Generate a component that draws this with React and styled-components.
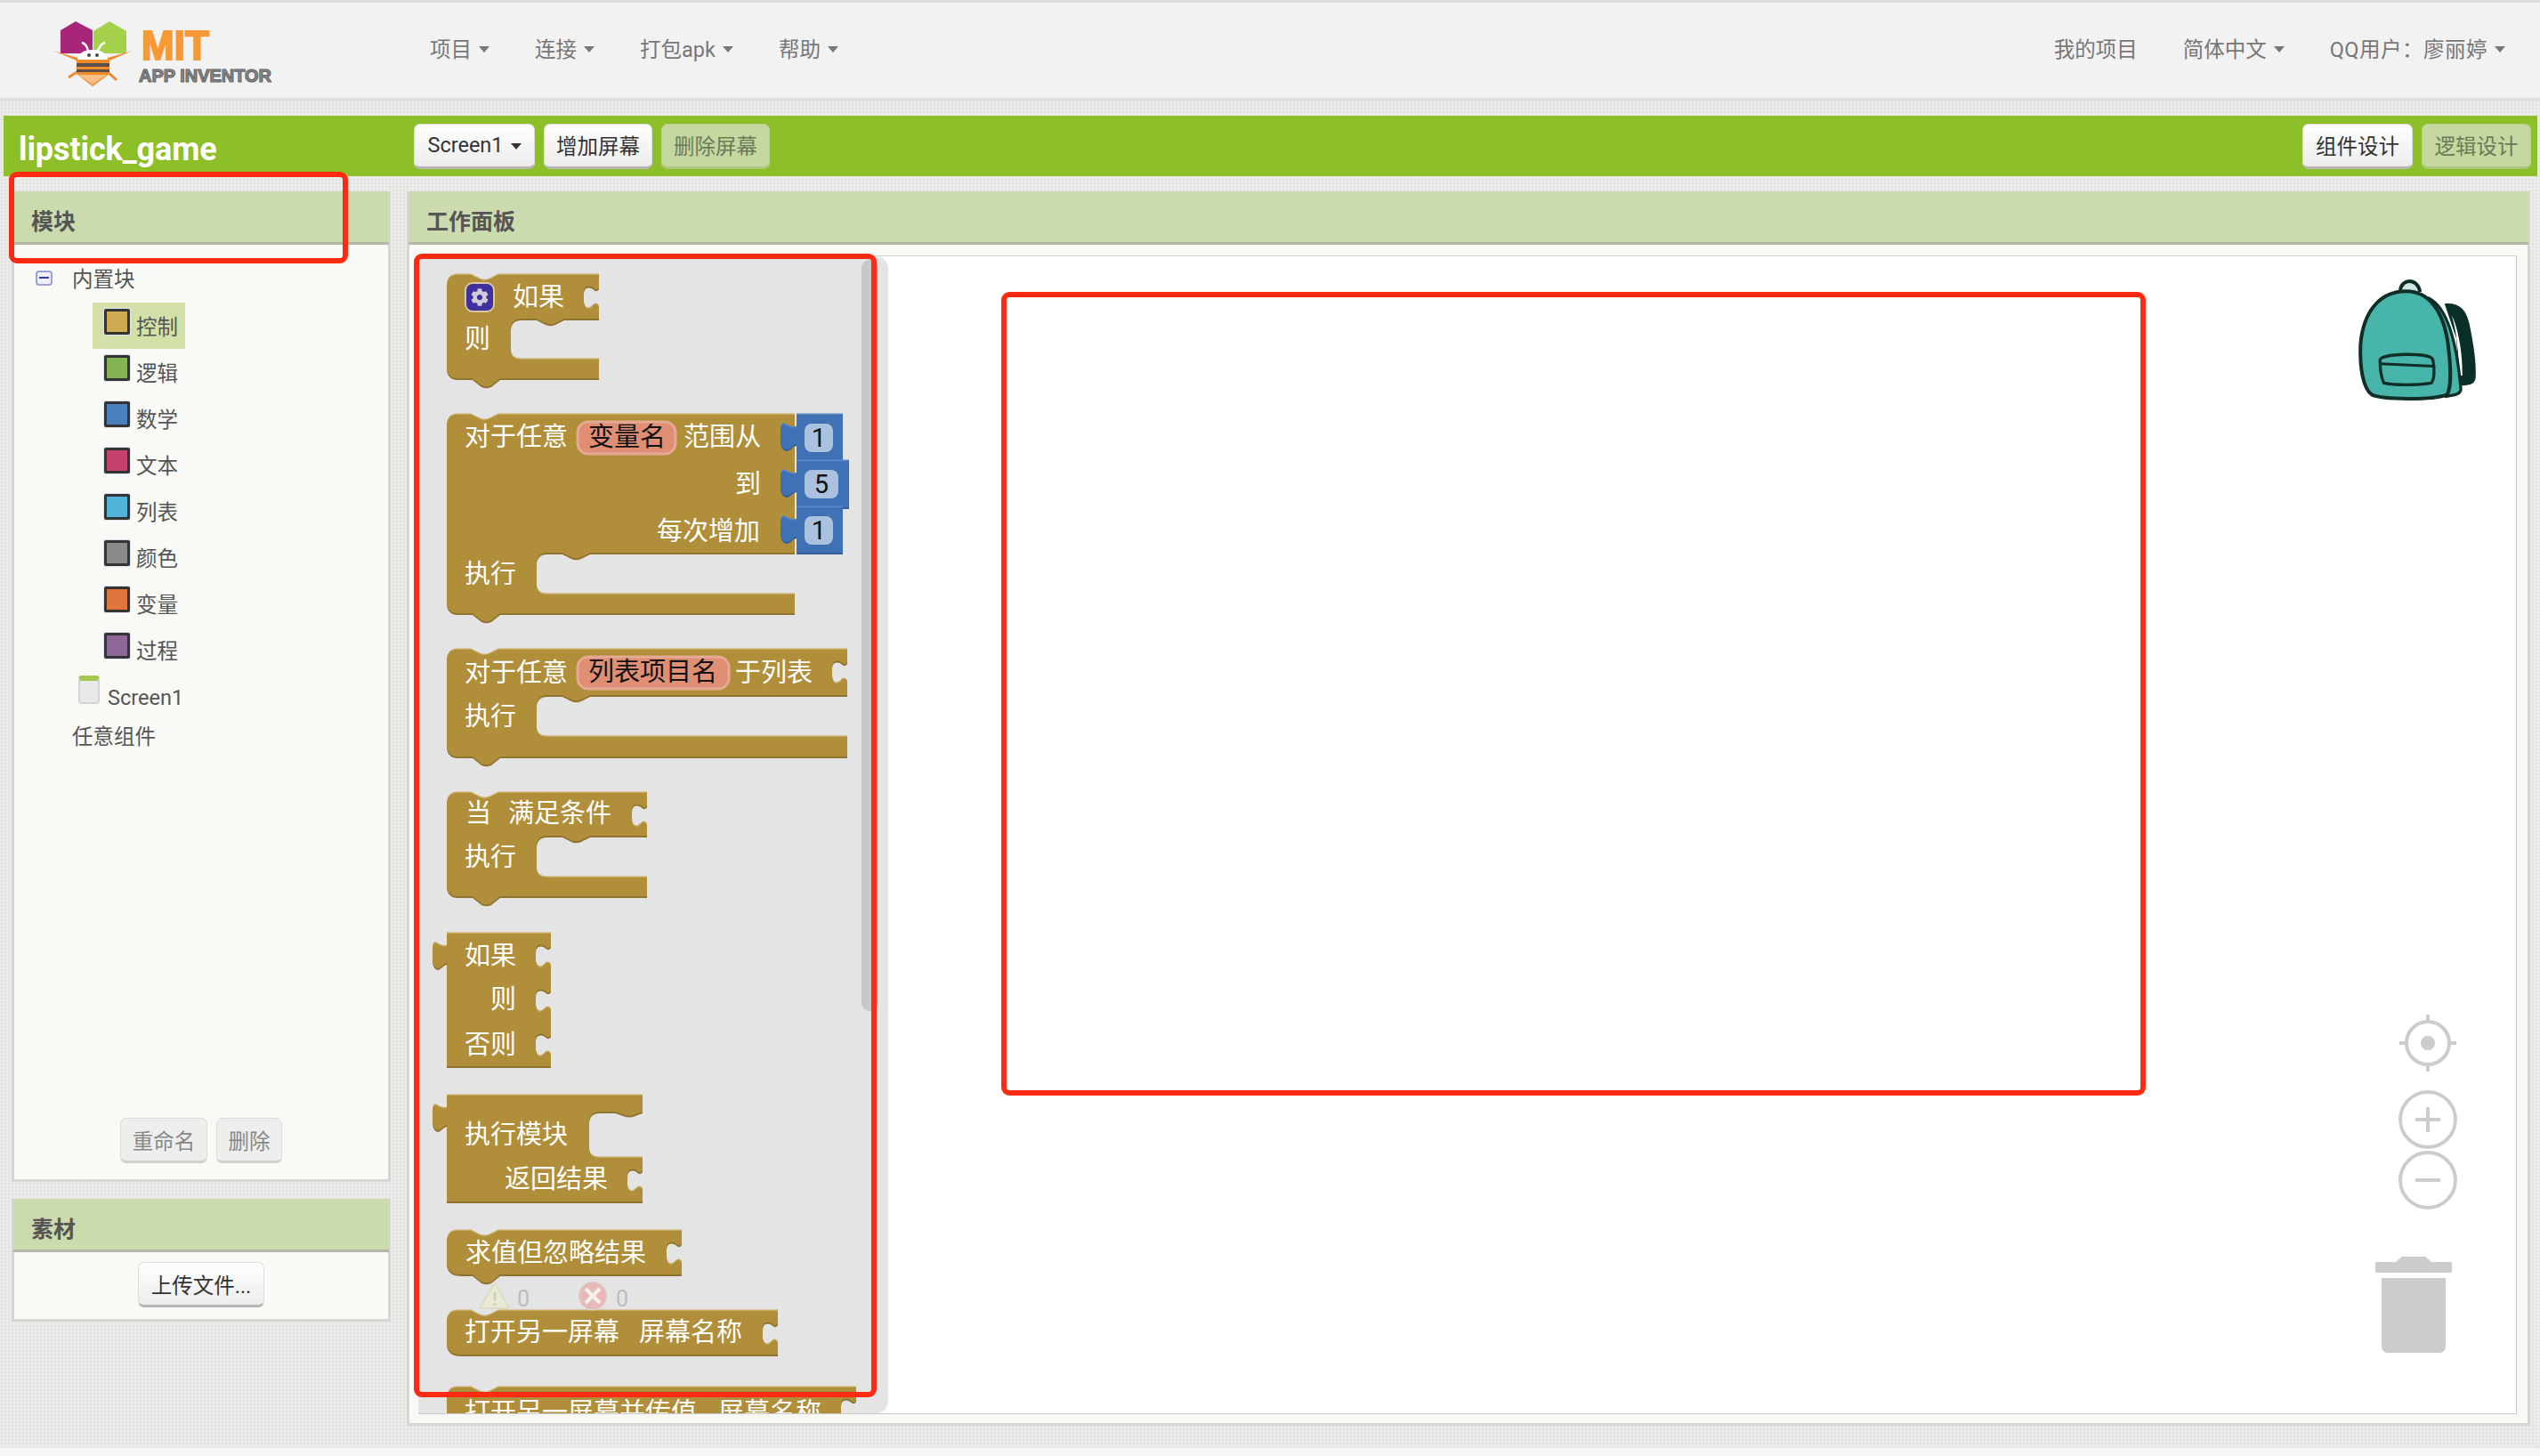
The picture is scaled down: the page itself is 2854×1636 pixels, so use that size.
import React from 'react';
import styled, { createGlobalStyle } from 'styled-components';
import { FaCog } from 'react-icons/fa';

const FONT = 'Roboto, "Noto Sans CJK SC", sans-serif';

const Global = createGlobalStyle`
  html, body { margin: 0; padding: 0; background: #ebebe9; }
  * { box-sizing: border-box; }
`;

const Page = styled.div`
  position: relative;
  width: 2854px;
  height: 1636px;
  overflow: hidden;
  display: flex;
  flex-direction: column;
  font-family: ${FONT};
  font-size: 23.5px;
  background-color: #ebebe9;
  background-image: radial-gradient(rgba(0, 0, 0, 0.045) 1px, transparent 1.2px);
  background-size: 4px 4px;
`;

const TopBar = styled.div`
  height: 113px;
  flex: none;
  display: flex;
  align-items: center;
  padding: 0 39px 0 56px;
  background: #f2f2f2;
  border-top: 3px solid #dcdcdc;
  border-bottom: 3px solid #dedede;
`;
const Logo = styled.svg`
  width: 270px;
  height: 80px;
  margin-top: 7px;
  flex: none;
`;
const Nav = styled.div`
  display: flex;
  align-items: center;
  gap: 51px;
  margin-top: -5px;
  margin-left: ${(p) => p.$left || '157px'};
`;
const NavItem = styled.div`
  display: flex;
  align-items: center;
  color: #777;
  white-space: nowrap;
  letter-spacing: ${(p) => p.$track || 0}px;
`;
const Caret = styled.span`
  display: inline-block;
  margin-left: 8px;
  margin-top: 3px;
  border-left: 6.5px solid transparent;
  border-right: 6.5px solid transparent;
  border-top: 7px solid ${(p) => p.$color || '#777'};
`;

const Toolbar = styled.div`
  height: 68px;
  flex: none;
  margin: 17px 3px 0 4px;
  background: #8dc028;
  display: flex;
  align-items: center;
  padding-right: 7px;
`;
const ProjectName = styled.div`
  width: 461px;
  flex: none;
  padding: 7px 0 0 17px;
  color: #fff;
  font-size: 36px;
  font-weight: 700;
  letter-spacing: -0.1px;
`;
const ToolGroup = styled.div`
  display: flex;
  gap: 10px;
  margin-left: ${(p) => p.$left || 0};
`;
const Button = styled.button`
  height: 51px;
  width: ${(p) => p.$w}px;
  padding: 0;
  display: flex;
  align-items: center;
  justify-content: center;
  font-family: ${FONT};
  font-size: 23.5px;
  color: #333;
  background: linear-gradient(#fff, #ececec);
  border: 1px solid #ddd;
  border-bottom: 3px solid #b5b5b5;
  border-radius: 7px;
`;
const GreenButton = styled(Button)`
  color: #6c7a58;
  background: #c5d8a0;
  border: 1px solid #b8d088;
  border-bottom: 3px solid #abc67a;
`;
const GreyButton = styled(Button)`
  color: #888;
  background: #eeeeec;
  border: 1px solid #dcdcdc;
  border-bottom: 3px solid #d0d0d0;
`;

const Main = styled.div`
  flex: 1;
  display: flex;
  gap: 18px;
  margin: 17px 11px 0 13px;
  min-height: 0;
`;
const LeftColumn = styled.div`
  width: 426px;
  flex: none;
  display: flex;
  flex-direction: column;
  gap: 19px;
`;
const Panel = styled.div`
  display: flex;
  flex-direction: column;
  background: #f9faf5;
  border: 3px solid #d6d6d4;
  height: ${(p) => p.$h}px;
  flex: none;
`;
const PanelHead = styled.div`
  height: 60px;
  flex: none;
  margin: -3px -1px 0;
  padding: 7px 0 0 20px;
  display: flex;
  align-items: center;
  background: #cbdbae;
  border-bottom: 3px solid #b4b7a8;
  font-size: 25px;
  font-weight: 700;
  color: #555;
`;

const Tree = styled.div`
  flex: 1;
  padding-top: 12px;
  color: #555;
`;
const RootRow = styled.div`
  height: 53px;
  padding-bottom: 3px;
  display: flex;
  align-items: center;
  padding-left: 24px;
`;
const Minus = styled.span`
  width: 19px;
  height: 17px;
  margin-right: 22px;
  border: 2px solid #98a4d8;
  border-radius: 4px;
  background: #f0f0f8;
  display: flex;
  align-items: center;
  justify-content: center;
  &::after {
    content: '';
    width: 11px;
    height: 2px;
    background: #3434c8;
  }
`;
const TreeItem = styled.div`
  width: 104px;
  height: 52px;
  margin-left: 88px;
  padding: 7px 0 0 13px;
  display: flex;
  background: ${(p) => (p.$on ? '#d3e1a8' : 'transparent')};
`;
const Swatch = styled.span`
  width: 29px;
  height: 29px;
  flex: none;
  border: 3px solid #333;
  border-radius: 2px;
  box-shadow: 0 0 0 1px #dfe3ee;
  background: ${(p) => p.$c};
`;
const TreeLabel = styled.span`
  margin: 6px 0 0 7px;
  line-height: 30px;
  white-space: nowrap;
`;
const ScreenRow = styled.div`
  height: 49px;
  padding: 3px 0 0 72px;
  display: flex;
`;
const ScreenLabel = styled(TreeLabel)`
  margin: 10px 0 0 9px;
`;
const ScreenIcon = styled.span`
  width: 24px;
  height: 32px;
  border: 2px solid #d4d4d4;
  border-top: 6px solid #a6c850;
  border-radius: 4px;
  background: #e8e8e8;
`;
const AnyRow = styled.div`
  padding: 4px 0 0 65px;
  line-height: 38px;
`;
const PanelFoot = styled.div`
  display: flex;
  justify-content: center;
  gap: 10px;
  padding-bottom: 18px;
`;
const AssetBody = styled.div`
  display: flex;
  justify-content: center;
  padding-top: 11px;
`;

const Workspace = styled(Panel)`
  flex: 1;
  height: 1387px;
`;
const WorkspaceBody = styled.div`
  flex: 1;
  min-height: 0;
  padding: 12px 12px 10px 10px;
`;
const Canvas = styled.div`
  position: relative;
  height: 100%;
  background: #fff;
  border-top: 1px solid #d4d4d4;
  border-right: 1px solid #c8c8c8;
  border-bottom: 1px solid #c8c8c8;
  display: flex;
`;
const Flyout = styled.div`
  position: relative;
  width: 528px;
  height: 100%;
  flex: none;
  overflow: hidden;
  background: #e4e4e4;
  border-radius: 0 14px 14px 0;
`;
const Scrollbar = styled.div`
  position: absolute;
  left: 498px;
  top: 4px;
  width: 19px;
  height: 844px;
  background: #c8c8c8;
  border-radius: 9px;
`;
const BlockSvg = styled.svg`
  display: block;
  width: 528px;
  height: 1301px;
`;
const BlockText = styled.text`
  font-family: ${FONT};
  font-size: 29px;
  dominant-baseline: central;
  fill: ${(p) => p.$c || '#fff'};
`;
const Floating = styled.svg`
  position: absolute;
  left: ${(p) => p.$x}px;
  top: ${(p) => p.$y}px;
`;
const RedBox = styled.div`
  position: absolute;
  left: ${(p) => p.$x}px;
  top: ${(p) => p.$y}px;
  width: ${(p) => p.$w}px;
  height: ${(p) => p.$h}px;
  border: 6px solid #ff2a12;
  border-radius: 9px;
`;
const FooterStrip = styled.div`
  height: 9px;
  flex: none;
  margin-top: 25px;
  background: #f6f6f6;
`;

// block path bits
const dipR = 'l10 5 q5.5 2.5 11 0 l10 -5';
const dipL = 'l-10 5 q-5.5 2.5 -11 0 l-10 -5';
const tabL = 'l-10 8 q-5.5 2.5 -11 0 l-10 -8';
const notch = (r, t) =>
  `L${r} ${t + 14} C${r - 1} ${t + 16} ${r - 3} ${t + 17} ${r - 5} ${t + 15.5} C${r - 8} ${t + 12} ${r - 12} ${t + 12} ${r - 14} ${t + 13} C${r - 17} ${t + 15} ${r - 17} ${t + 18} ${r - 17} ${t + 22} L${r - 17} ${t + 30} C${r - 17} ${t + 34} ${r - 15} ${t + 38} ${r - 12} ${t + 38} C${r - 9} ${t + 38} ${r - 6} ${t + 33} ${r - 4} ${t + 33} C${r - 2} ${t + 33} ${r - 1} ${t + 34} ${r} ${t + 36} `;
const valueTab = (l, t, d = 16) =>
  `L${l} ${t + 33} C${l - 4} ${t + 34} ${l - d * 0.45} ${t + 39} ${l - d * 0.62} ${t + 39} C${l - d * 0.8} ${t + 39} ${l - d} ${t + 35} ${l - d} ${t + 28} L${l - d} ${t + 18} C${l - d} ${t + 12} ${l - d * 0.88} ${t + 10} ${l - d * 0.75} ${t + 11} C${l - d * 0.5} ${t + 13} ${l - 3} ${t + 16} ${l} ${t + 14} `;
const topEdge = (l, t) => `M${l} ${t + 13} Q${l} ${t} ${l + 13} ${t} L${l + 27} ${t} ${dipR} `;

const cBlock = ({ l = 502, t, r, rowB, inner, stB, b, hasNotch }) =>
  topEdge(l, t) +
  `L${r} ${t} ` +
  (hasNotch ? notch(r, t) : '') +
  `L${r} ${rowB} L${inner + 60} ${rowB} ${dipL} L${inner + 12} ${rowB} Q${inner} ${rowB} ${inner} ${rowB + 12} L${inner} ${stB - 10} Q${inner} ${stB} ${inner + 12} ${stB} L${r} ${stB} L${r} ${b} L${l + 60} ${b} ${tabL} L${l + 13} ${b} Q${l} ${b} ${l} ${b - 13} Z`;

const barBlock = ({ l = 502, t, r, b, tab }) =>
  topEdge(l, t) +
  `L${r} ${t} ` +
  notch(r, t) +
  `L${r} ${b} ` +
  (tab ? `L${l + 60} ${b} ${tabL} ` : '') +
  `L${l + 16} ${b} Q${l} ${b} ${l} ${b - 14} Z`;

const ifValue = `M502 1049 L619 1049 ${notch(619, 1049)}${notch(619, 1099)}${notch(619, 1149)}L619 1198 L502 1198 ${valueTab(502, 1049)}Z`;
const doResult = `M502 1231 L722 1231 L722 1249 l-8 3 q-7 3 -14 0 l-9 -3 L674 1249 Q662 1249 662 1261 L662 1291 Q662 1301 674 1301 L722 1301 ${notch(722, 1301)}L722 1350 L502 1350 ${valueTab(502, 1231)}Z`;
const numBlock = (t, b, r) => `M895 ${t} L${r} ${t} L${r} ${b} L895 ${b} ${valueTab(895, t, 18)}Z`;

const Shape = ({ d, fill = '#b18e3a', light = '#c7a860', dark = '#8f7330' }) => (
  <g>
    <path d={d} fill={light} transform="translate(0,-1.5)" />
    <path d={d} fill={dark} transform="translate(0,2)" />
    <path d={d} fill={fill} />
  </g>
);

const VarPill = ({ x, y, w, label }) => (
  <g>
    <rect x={x} y={y} width={w} height={36} rx={12} fill="#e08f74" stroke="#e6a995" strokeWidth={3} />
    <BlockText x={x + 12} y={y + 17} $c="#111">{label}</BlockText>
  </g>
);

const NumField = ({ t, b, r, w, label }) => (
  <g>
    <Shape d={numBlock(t, b, r)} fill="#3f71b5" light="#5b88c4" dark="#345f9c" />
    <rect x={904} y={t + 10} width={w} height={32} rx={8} fill="#abc1df" />
    <text x={904 + w / 2} y={t + 36} textAnchor="middle" fontFamily={FONT} fontSize={29} fill="#111">{label}</text>
  </g>
);

const words = [
  [576, 334, '如果'], [522, 381, '则'],
  [522, 491, '对于任意'], [768, 491, '范围从'], [826, 544, '到'], [738, 597, '每次增加'], [522, 645, '执行'],
  [522, 756, '对于任意'], [826, 756, '于列表'], [522, 805, '执行'],
  [523, 914, '当'], [571, 914, '满足条件'], [522, 963, '执行'],
  [522, 1074, '如果'], [551, 1123, '则'], [522, 1174, '否则'],
  [522, 1275, '执行模块'], [567, 1325, '返回结果'],
  [523, 1408, '求值但忽略结果'],
  [522, 1497, '打开另一屏幕'], [718, 1497, '屏幕名称'],
  [522, 1587, '打开另一屏幕并传值'], [807, 1587, '屏幕名称'],
];

const treeItems = [
  ['控制', '#cdaa52'], ['逻辑', '#85b455'], ['数学', '#4a80bd'], ['文本', '#c5406b'],
  ['列表', '#50b4d9'], ['颜色', '#8a8a8a'], ['变量', '#df743c'], ['过程', '#8e6797'],
];

const AppLogo = () => (
  <Logo viewBox="56 20 270 80">
    <defs>
      <filter id="soft"><feGaussianBlur stdDeviation="0.5" /></filter>
    </defs>
    <g filter="url(#soft)">
      <path d="M85 24 L104 34 L104 60 L68 60 L68 34 Z" fill="#a8287a" />
      <path d="M123 24 L142 35 L142 60 L105 60 L105 35 Z" fill="#a5d04c" />
      <path d="M60 57 L87 65 L121 65 L149 57 L123 68 L123 83 L104 97 L86 83 L86 68 Z" fill="#f08a2c" />
      <path d="M77 87 L88 80 M131 90 L120 80" stroke="#f08a2c" strokeWidth={3} />
      <path d="M92 48 Q97 49 99 57 M118 48 Q113 49 110 57" stroke="#fff" strokeWidth={2.5} fill="none" />
      <path d="M87 67 Q89 56 104 56 Q119 56 121 67 Z" fill="#fff" />
      <circle cx={100} cy={62} r={2} fill="#444" />
      <circle cx={109} cy={62} r={2} fill="#444" />
      <rect x={86} y={71} width={37} height={4} fill="#5a5048" />
      <rect x={86} y={78} width={37} height={3} fill="#5a5048" />
      <path d="M88 84 L120 84 L104 95 Z" fill="#fff3e0" opacity={0.5} />
    </g>
    <text x={159} y={67} fontFamily="Liberation Sans" fontWeight={700} fontSize={46} fill="#f79a35" stroke="#f79a35" strokeWidth={2} textLength={76} lengthAdjust="spacingAndGlyphs">MIT</text>
    <text x={156} y={92} fontFamily="Liberation Sans" fontWeight={700} fontSize={21} fill="#8a8a8a" stroke="#666" strokeWidth={1.2} textLength={149} lengthAdjust="spacingAndGlyphs">APP INVENTOR</text>
  </Logo>
);

const Backpack = () => (
  <Floating $x={2177} $y={24} width={138} height={142} viewBox="440 95 415 425">
    <path d="M590 138 C595 95 650 95 657 142" fill="#cfe6e2" stroke="#0f2e28" strokeWidth={12} />
    <path d="M740 182 C790 178 812 200 824 250 C838 320 848 380 845 430 C845 452 825 460 790 458 L780 300 Z" fill="#0a2f26" />
    <path d="M764 222 C785 260 802 350 800 425 L790 425 C788 350 780 270 764 222 Z" fill="#fff" />
    <path d="M690 165 C745 195 780 300 795 470 C795 490 770 490 745 495 L700 300 Z" fill="#47b5aa" stroke="#0f2e28" strokeWidth={10} />
    <path d="M610 140 C520 140 465 210 456 320 C453 400 465 470 495 490 C530 505 690 510 748 490 C762 470 762 400 752 320 C737 210 690 140 610 140 Z" fill="#47b5aa" stroke="#0f2e28" strokeWidth={12} />
    <path d="M522 372 C525 350 690 345 700 370 C708 400 705 440 695 450 C650 458 570 458 535 450 C525 430 522 400 522 372 Z" fill="#47b5aa" stroke="#0f2e28" strokeWidth={10} />
    <path d="M524 385 L702 393" stroke="#0f2e28" strokeWidth={9} />
  </Floating>
);

const ZoomControls = () => (
  <>
    <Floating $x={2223} $y={849} width={70} height={70} viewBox="0 0 70 70" fill="none" stroke="#ccc" strokeWidth={4}>
      <circle cx={35} cy={35} r={24} />
      <path d="M35 3 V11 M35 59 V67 M3 35 H11 M59 35 H67" />
      <circle cx={35} cy={35} r={8} fill="#ccc" stroke="none" />
    </Floating>
    <Floating $x={2223} $y={935} width={70} height={70} viewBox="0 0 70 70" fill="none" stroke="#ccc" strokeWidth={4}>
      <circle cx={35} cy={35} r={31} />
      <path d="M21 35 H49 M35 21 V49" />
    </Floating>
    <Floating $x={2223} $y={1003} width={70} height={70} viewBox="0 0 70 70" fill="none" stroke="#ccc" strokeWidth={4}>
      <circle cx={35} cy={35} r={31} />
      <path d="M21 35 H49" />
    </Floating>
    <Floating $x={2199} $y={1124} width={86} height={109} viewBox="0 0 86 109" fill="#ccc">
      <path d="M0 6 H23 L30 0 H56 L63 6 H86 V18 H0 Z" />
      <path d="M7 24 H79 V101 Q79 108 72 108 H14 Q7 108 7 101 Z" />
    </Floating>
  </>
);

const App = () => (
  <Page>
    <Global />
    <TopBar>
      <AppLogo />
      <Nav>
        <NavItem>项目<Caret /></NavItem>
        <NavItem>连接<Caret /></NavItem>
        <NavItem>打包apk<Caret /></NavItem>
        <NavItem>帮助<Caret /></NavItem>
      </Nav>
      <Nav $left="auto">
        <NavItem>我的项目</NavItem>
        <NavItem>简体中文<Caret /></NavItem>
        <NavItem $track={0.5}>QQ用户：廖丽婷<Caret /></NavItem>
      </Nav>
    </TopBar>

    <Toolbar>
      <ProjectName>lipstick_game</ProjectName>
      <ToolGroup>
        <Button $w={136}>Screen1<Caret $color="#333" /></Button>
        <Button $w={122}>增加屏幕</Button>
        <GreenButton $w={122}>删除屏幕</GreenButton>
      </ToolGroup>
      <ToolGroup $left="auto">
        <Button $w={124}>组件设计</Button>
        <GreenButton $w={123}>逻辑设计</GreenButton>
      </ToolGroup>
    </Toolbar>

    <Main>
      <LeftColumn>
        <Panel $h={1113}>
          <PanelHead>模块</PanelHead>
          <Tree>
            <RootRow><Minus />内置块</RootRow>
            {treeItems.map(([label, color], i) => (
              <TreeItem key={label} $on={i === 0}>
                <Swatch $c={color} />
                <TreeLabel>{label}</TreeLabel>
              </TreeItem>
            ))}
            <ScreenRow>
              <ScreenIcon />
              <ScreenLabel>Screen1</ScreenLabel>
            </ScreenRow>
            <AnyRow>任意组件</AnyRow>
          </Tree>
          <PanelFoot>
            <GreyButton $w={98}>重命名</GreyButton>
            <GreyButton $w={74}>删除</GreyButton>
          </PanelFoot>
        </Panel>
        <Panel $h={138}>
          <PanelHead>素材</PanelHead>
          <AssetBody>
            <Button $w={142}>上传文件...</Button>
          </AssetBody>
        </Panel>
      </LeftColumn>

      <Workspace>
        <PanelHead>工作面板</PanelHead>
        <WorkspaceBody>
          <Canvas>
            <Flyout>
              <BlockSvg viewBox="470 288 528 1301">
                <Shape d={cBlock({ t: 309, r: 673, rowB: 358, inner: 574, stB: 404, b: 425, hasNotch: true })} />
                <rect x={523} y={318} width={32} height={32} rx={8} fill="#3f2f9f" stroke="#d8c9a0" strokeWidth={2} />
                <FaCog x={529} y={324} size={20} color="#d0cbd8" />

                <Shape d={cBlock({ t: 466, r: 893, rowB: 621, inner: 603, stB: 668, b: 689 })} />
                <VarPill x={649} y={474} w={110} label="变量名" />
                <NumField t={466} b={517} r={947} w={32} label="1" />
                <NumField t={518} b={570} r={954} w={38} label="5" />
                <NumField t={570} b={621} r={947} w={32} label="1" />

                <Shape d={cBlock({ t: 730, r: 952, rowB: 781, inner: 603, stB: 828, b: 850, hasNotch: true })} />
                <VarPill x={649} y={738} w={170} label="列表项目名" />

                <Shape d={cBlock({ t: 891, r: 727, rowB: 939, inner: 603, stB: 986, b: 1007, hasNotch: true })} />
                <Shape d={ifValue} />
                <Shape d={doResult} />
                <Shape d={barBlock({ t: 1383, r: 766, b: 1432, tab: true })} />
                <Shape d={barBlock({ t: 1473, r: 874, b: 1522 })} />
                <Shape d={barBlock({ t: 1559, r: 962, b: 1640 })} />

                {words.map(([x, y, label]) => (
                  <BlockText key={`${x}-${y}`} x={x} y={y}>{label}</BlockText>
                ))}

                <path d="M556 1441 L572 1470 L539 1470 Z" fill="#e9ead4" stroke="#dcdcc8" strokeWidth={2} strokeLinejoin="round" />
                <text x={556} y={1467} textAnchor="middle" fontFamily={FONT} fontSize={20} fontWeight={700} fill="#cfcfb8">!</text>
                <text x={581} y={1468} fontFamily={FONT} fontSize={25} fill="#bdbdbd">0</text>
                <circle cx={666} cy={1456} r={16} fill="#e8b9b9" stroke="#dcdcdc" strokeWidth={1} />
                <path d="M658 1448 L674 1464 M674 1448 L658 1464" stroke="#f6f0f0" strokeWidth={4} />
                <text x={692} y={1468} fontFamily={FONT} fontSize={25} fill="#bdbdbd">0</text>
              </BlockSvg>
              <Scrollbar />
            </Flyout>
            <Backpack />
            <ZoomControls />
          </Canvas>
        </WorkspaceBody>
      </Workspace>
    </Main>
    <FooterStrip />

    <RedBox $x={10} $y={193} $w={381} $h={103} />
    <RedBox $x={465} $y={285} $w={520} $h={1285} />
    <RedBox $x={1125} $y={328} $w={1286} $h={903} />
  </Page>
);

export default App;
